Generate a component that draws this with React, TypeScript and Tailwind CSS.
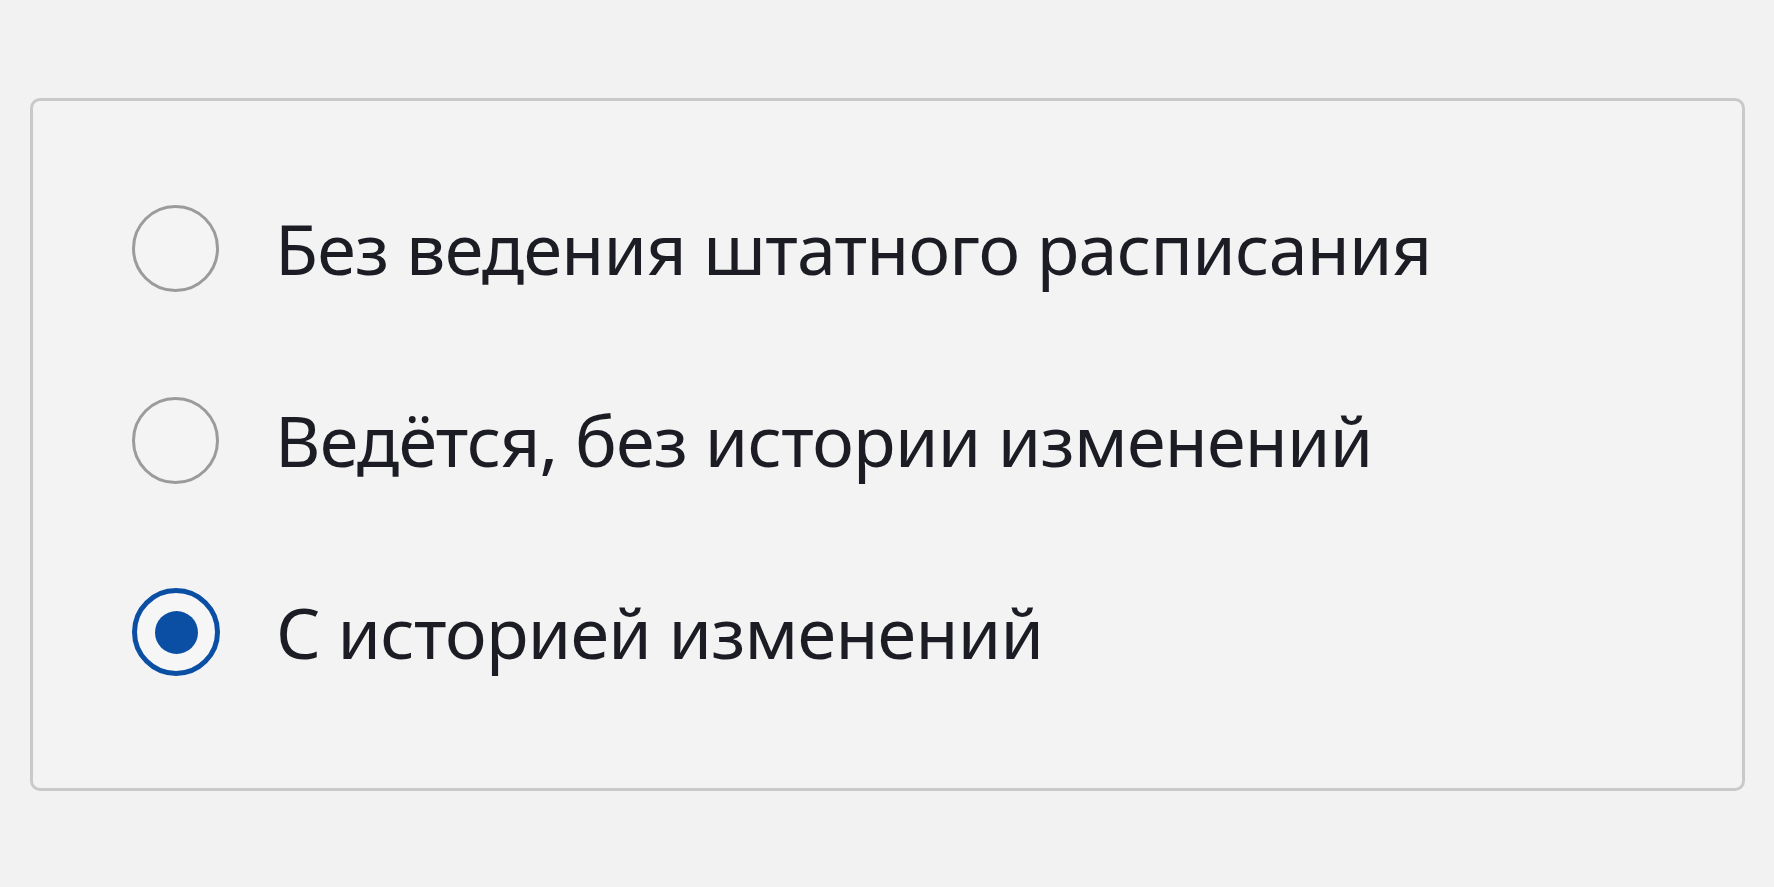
import React, { useState } from "react";

const options = [
  "Без ведения штатного расписания",
  "Ведётся, без истории изменений",
  "С историей изменений",
];

function Radio({ checked }: { checked: boolean }) {
  return checked ? (
    <span className="flex h-[88px] w-[88px] shrink-0 items-center justify-center rounded-full border-[5px] border-[#0b4fa5] bg-[#f6f6f6]">
      <span className="h-[43px] w-[43px] rounded-full bg-[#0b4fa5]" />
    </span>
  ) : (
    <span className="h-[87px] w-[87px] shrink-0 rounded-full border-[3px] border-[#9b9b9b] bg-[#f4f4f4]" />
  );
}

export default function App() {
  const [value, setValue] = useState(2);
  return (
    <div
      className="min-h-[887px] w-full bg-[#f2f2f2] pl-[30px] pr-[29px] pt-[98px]"
      style={{ fontFamily: '"Noto Sans", "Open Sans", sans-serif' }}
    >
      <div className="flex flex-col rounded-[10px] border-[3px] border-[#c9c9c9] bg-[#f3f3f3] pb-[60px] pl-[99px] pt-[51px]">
        {options.map((label, i) => (
          <label
            key={label}
            className="flex h-[192px] cursor-pointer items-center gap-[56px]"
            onClick={() => setValue(i)}
          >
            <Radio checked={value === i} />
            <span className="text-[70px] leading-none tracking-[-0.75px] text-[#1c1d24]">{label}</span>
          </label>
        ))}
      </div>
    </div>
  );
}
